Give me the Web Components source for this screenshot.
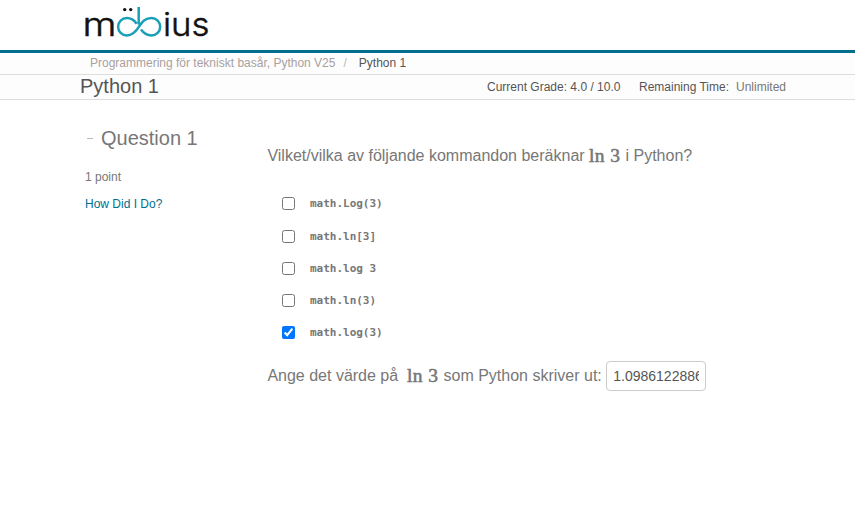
<!DOCTYPE html>
<html lang="sv"><head><meta charset="utf-8"><title>Python 1</title>
<style>body{margin:0;background:#fff;font-family:"Liberation Sans",Arial,sans-serif;color:#777}</style></head><body>
<quiz-page></quiz-page>
<script>
const define = (name, html, init) => customElements.define(name, class extends HTMLElement {
  constructor(){ super(); this.attachShadow({mode:'open'}).innerHTML = html; if(init) init(this, this.shadowRoot); }
});
define('brand-logo', `<style>:host{display:block;height:50px;border-bottom:3px solid #006f8e;background:#fff}
svg{display:block;margin-left:80px}text{font-family:Inter,sans-serif;font-weight:300;font-size:33px;fill:#111;stroke:#111;stroke-width:.5px}</style>
<svg width="140" height="50" viewBox="80 0 140 50" role="img" aria-label="möbius">
<text x="82.600" y="36" textLength="34" lengthAdjust="spacingAndGlyphs">m</text>
<text x="163" y="36" textLength="46.500" lengthAdjust="spacingAndGlyphs">ius</text>
<circle cx="124.700" cy="9.600" r="1.700" fill="#111"/><circle cx="130.700" cy="9.600" r="1.700" fill="#111"/>
<path d="M138.700 7V24.500M151.500 18A8.700 8.700 0 0 1 151.500 35.400C146.500 35.400 143.500 33 141 29.500M151.500 18C145.500 18 142.500 21.500 139.200 26.300C136 31.500 132.500 35.400 126.800 35.400A8.700 8.700 0 0 1 126.800 18C131.500 18 134.500 20.500 136.700 23.800" fill="none" stroke="#1a9fb8" stroke-width="2.500"/>
</svg>`);
define('crumb-bar', `<style>:host{display:flex;box-sizing:border-box;height:22px;padding-left:90px;border-bottom:1px solid #ddd;background:#fdfdfd;font-size:12px;line-height:20px;color:#555}
.a{color:#aa9f9f}.s{color:#bbb;margin:0 12px 0 8px}</style><span class="a">Programmering för tekniskt basår, Python V25</span><span class="s">/</span><span>Python 1</span>`);
define('title-bar', `<style>:host{display:flex;box-sizing:border-box;height:25px;padding-left:80px;border-bottom:1px solid #ddd;background:#fdfdfd;color:#555;font-size:12px;line-height:24px}
h1{font-weight:400;font-size:20px;line-height:23px;margin:0;width:407px}.g{width:152px}.t{width:97px}.u{color:#777}</style>
<h1>Python 1</h1><span class="g">Current Grade: 4.0 / 10.0</span><span class="t">Remaining Time:</span><span class="u">Unlimited</span>`);
define('question-info', `<style>:host{display:block;width:182px;padding:26px 0 0 85px}h2{font-size:20px;line-height:24px;font-weight:400;margin:0;display:flex}
i{width:6px;height:1px;background:#bbb;margin:12px 8px 0 2px}p{margin:20px 0 0;font-size:12px;line-height:14px}a{display:block;margin-top:13px;font-size:12px;line-height:14px;color:#006f8e}</style>
<h2><i></i>Question 1</h2><p>1 point</p><a>How Did I Do?</a>`);
define('math-ln', `<style>:host{display:inline-block;font:19.5px/20px "Liberation Serif",serif;width:32px;white-space:nowrap;-webkit-text-stroke:.55px #777;vertical-align:-1px;margin-top:-1px}span{letter-spacing:.35px}</style><span>ln 3</span>`);
define('answer-choice', `<style>:host{display:flex;height:var(--h,32px)}input{width:13px;height:13px;margin:2px 14.5px 0 0}
code{font:bold 11px/16px "DejaVu Sans Mono",monospace;padding-top:1px}</style><input type="checkbox"><code><slot></slot></code>`,
 (h,r)=>{r.querySelector('input').checked=h.hasAttribute('checked')});
define('question-body', `<style>:host{display:block;padding:46px 0 0 .4px;font-size:16px;line-height:20px}.q{height:49px;white-space:nowrap}
.choices{padding-left:15px;height:166px}.r{display:flex;align-items:center;white-space:nowrap}
input{box-sizing:border-box;width:100px;height:30px;border:1px solid #ccc;border-radius:4px;padding:4px 6px;font:14px "Liberation Sans",sans-serif;color:#555;margin-left:4.500px}</style>
<div class="q">Vilket/vilka av följande kommandon beräknar <math-ln></math-ln> i Python?</div>
<div class="choices"><answer-choice style="--h:33px">math.Log(3)</answer-choice><answer-choice>math.ln[3]</answer-choice><answer-choice>math.log 3</answer-choice><answer-choice>math.ln(3)</answer-choice><answer-choice checked>math.log(3)</answer-choice></div>
<div class="r"><span>Ange det värde på&nbsp; <math-ln></math-ln> som Python skriver ut:</span><input value="1.09861228866811"></div>`);
define('quiz-page', `<style>:host{display:block;height:525px;overflow:hidden}main{display:flex}</style>
<brand-logo></brand-logo><crumb-bar></crumb-bar><title-bar></title-bar><main><question-info></question-info><question-body></question-body></main>`);
</script></body></html>
